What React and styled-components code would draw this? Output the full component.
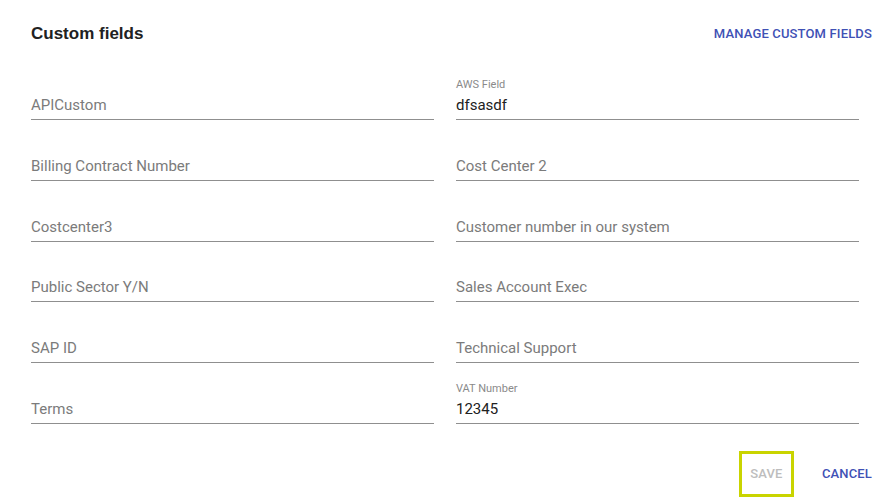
import React from "react";
import styled, { createGlobalStyle } from "styled-components";

const GlobalStyle = createGlobalStyle`
  html, body {
    margin: 0;
    padding: 0;
    background: #ffffff;
  }
  body {
    font-family: Roboto, "Liberation Sans", Arial, sans-serif;
  }
`;

const Page = styled.div`
  width: 891px;
  height: 497px;
  box-sizing: border-box;
  padding: 14px 11px 0 31px;
  display: flex;
  flex-direction: column;
  overflow: hidden;
`;

const Header = styled.div`
  height: 40px;
  display: flex;
  align-items: center;
  justify-content: space-between;
`;

const Title = styled.h2`
  margin: 0;
  font-family: "Liberation Sans", Arial, sans-serif;
  font-size: 17px;
  font-weight: 700;
  color: #212121;
`;

const TextButton = styled.button`
  border: ${(p) => (p.$focused ? "3px solid #c9d400" : "none")};
  background: transparent;
  box-sizing: border-box;
  height: ${(p) => (p.$tall ? "46px" : "36px")};
  width: ${(p) => (p.$focused ? "55px" : "auto")};
  margin-top: ${(p) => (p.$tall ? "0" : "-2px")};
  padding: ${(p) => (p.$focused ? "0" : "0 8px")};
  font-family: Roboto, "Liberation Sans", Arial, sans-serif;
  font-size: 13px;
  font-weight: 500;
  letter-spacing: 0.15px;
  text-transform: uppercase;
  color: ${(p) => (p.disabled ? "#bdbdbd" : "#3f51b5")};
  cursor: ${(p) => (p.disabled ? "default" : "pointer")};
`;

const Grid = styled.div`
  margin-top: 18px;
  margin-right: 22px;
  display: grid;
  grid-template-columns: 403px 403px;
  column-gap: 22px;
  row-gap: 12.8px;
`;

const FieldBox = styled.div`
  position: relative;
  height: 48px;
  box-sizing: border-box;
  padding-top: 20px;
  border-bottom: 1px solid #8f8f8f;
`;

const FloatLabel = styled.label`
  position: absolute;
  left: 0;
  top: 7px;
  font-size: 11px;
  line-height: 12px;
  color: #8a8a8a;
`;

const Value = styled.div`
  height: 26px;
  line-height: 26px;
  font-size: 15px;
  color: ${(p) => (p.$placeholder ? "#7b7b7b" : "#212121")};
`;

const Footer = styled.div`
  margin-top: 27px;
  display: flex;
  justify-content: flex-end;
  align-items: center;
  gap: 20px;
`;

const fields = [
  { label: "APICustom" },
  { label: "AWS Field", value: "dfsasdf" },
  { label: "Billing Contract Number" },
  { label: "Cost Center 2" },
  { label: "Costcenter3" },
  { label: "Customer number in our system" },
  { label: "Public Sector Y/N" },
  { label: "Sales Account Exec" },
  { label: "SAP ID" },
  { label: "Technical Support" },
  { label: "Terms" },
  { label: "VAT Number", value: "12345" },
];

function Field({ label, value }) {
  return (
    <FieldBox>
      {value ? (
        <>
          <FloatLabel>{label}</FloatLabel>
          <Value>{value}</Value>
        </>
      ) : (
        <Value $placeholder>{label}</Value>
      )}
    </FieldBox>
  );
}

function App() {
  return (
    <>
      <GlobalStyle />
      <Page>
        <Header>
          <Title>Custom fields</Title>
          <TextButton>Manage custom fields</TextButton>
        </Header>
        <Grid>
          {fields.map((f) => (
            <Field key={f.label} label={f.label} value={f.value} />
          ))}
        </Grid>
        <Footer>
          <TextButton disabled $focused $tall>
            Save
          </TextButton>
          <TextButton $tall>Cancel</TextButton>
        </Footer>
      </Page>
    </>
  );
}

export default App;
